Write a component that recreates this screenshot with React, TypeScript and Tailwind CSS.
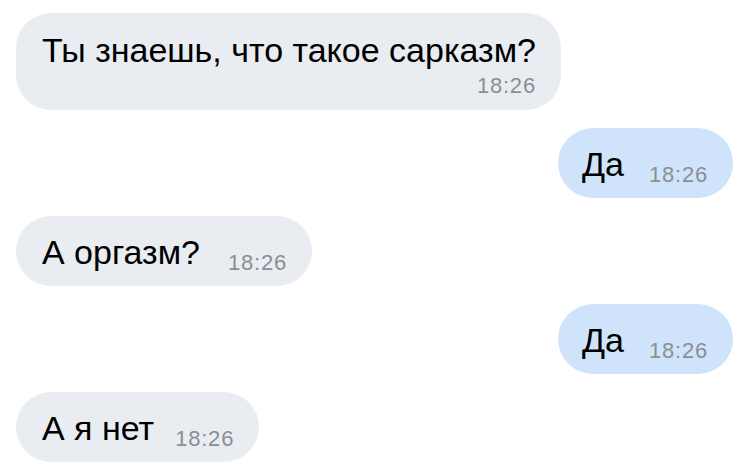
import React from "react";

const font = { fontFamily: '"Liberation Sans", Arial, sans-serif' };

function Single({ text, out, gap }: { text: string; out?: boolean; gap: string }) {
  return (
    <div className={out ? "flex justify-end" : "flex justify-start"}>
      <div
        className={
          (out ? "bg-[#cfe4fb] pl-[24px] pr-[25px]" : "bg-[#e9ecf0] pl-[26px] pr-[25px]") +
          " flex items-end rounded-[35px] pt-[16px] pb-[14px]"
        }
      >
        <span className="text-[34px] leading-[40px] text-black">{text}</span>
        <span className={gap + " -mb-px text-[22px] leading-[20px] tracking-[0.8px] text-[#8a8f96]"}>
          18:26
        </span>
      </div>
    </div>
  );
}

export default function App() {
  return (
    <div className="w-[750px] h-[475px] bg-white overflow-hidden" style={font}>
      <div className="flex flex-col gap-[18px] pl-[16px] pr-[17px] pt-[13px]">
        <div className="flex justify-start">
          <div className="flex flex-col rounded-[35px] bg-[#e9ecf0] pl-[26px] pr-[25px] pt-[17px] pb-[14px]">
            <span className="text-[34px] leading-[40px] text-black">Ты знаешь, что такое сарказм?</span>
            <span className="mt-[6px] self-end text-[22px] leading-[20px] tracking-[0.8px] text-[#8a8f96]">18:26</span>
          </div>
        </div>
        <Single text="Да" out gap="ml-[25px]" />
        <Single text="А оргазм?" gap="ml-[28px]" />
        <Single text="Да" out gap="ml-[25px]" />
        <Single text="А я нет" gap="ml-[21px]" />
      </div>
    </div>
  );
}
